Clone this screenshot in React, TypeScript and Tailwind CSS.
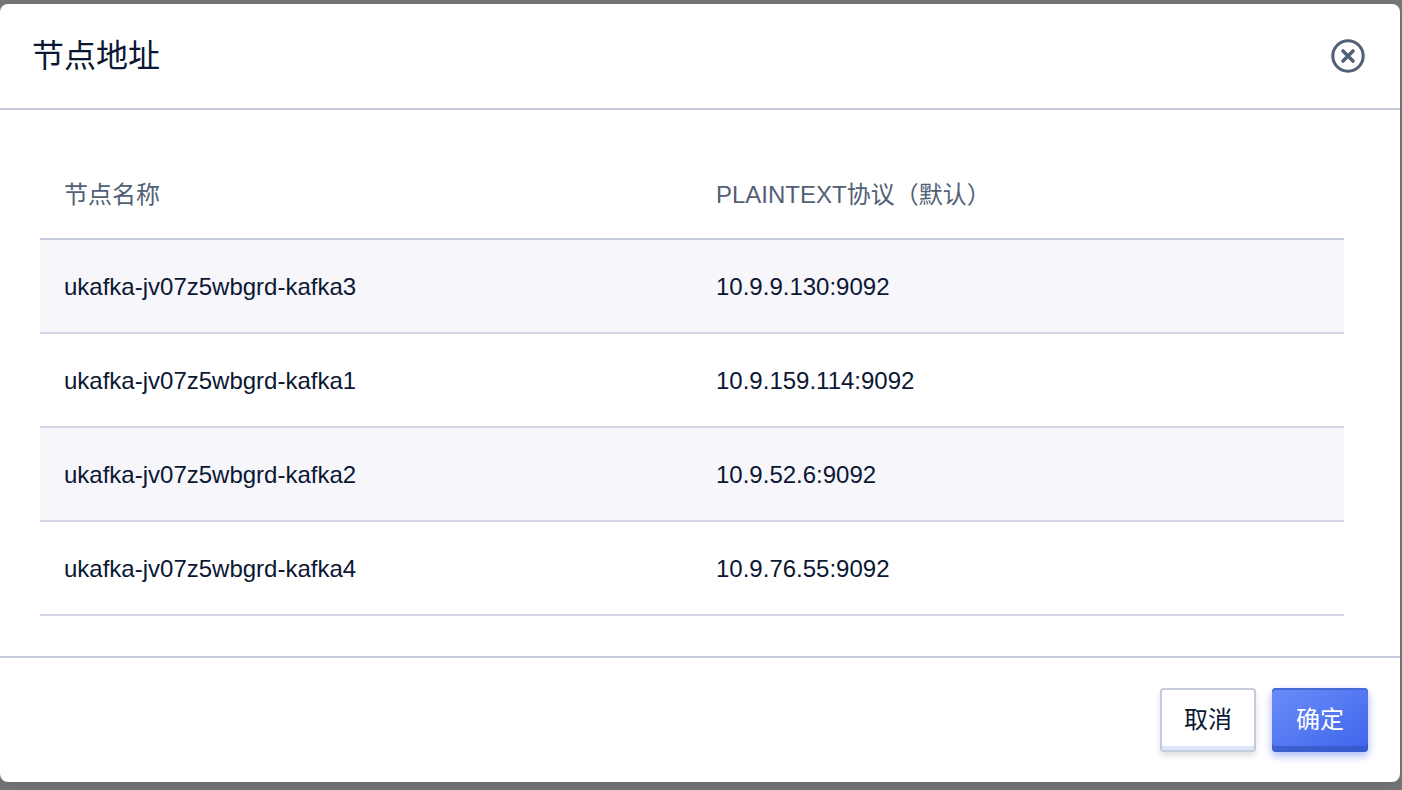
import React from "react";

type KafkaNode = { name: string; address: string };

const nodes: KafkaNode[] = [
  { name: "ukafka-jv07z5wbgrd-kafka3", address: "10.9.9.130:9092" },
  { name: "ukafka-jv07z5wbgrd-kafka1", address: "10.9.159.114:9092" },
  { name: "ukafka-jv07z5wbgrd-kafka2", address: "10.9.52.6:9092" },
  { name: "ukafka-jv07z5wbgrd-kafka4", address: "10.9.76.55:9092" },
];

function CloseIcon() {
  return (
    <svg viewBox="0 0 34 34" className="size-[34px]" fill="none" stroke="currentColor" aria-hidden="true">
      <circle cx="17" cy="17" r="15.2" strokeWidth="3.1" />
      <path d="M12 12 22 22M22 12 12 22" strokeWidth="3.6" strokeLinecap="round" />
    </svg>
  );
}

function NodeTable() {
  return (
    <table className="w-full table-fixed border-separate border-spacing-0 text-left text-2xl">
      <thead>
        <tr className="h-[90px] text-[#526075]">
          <th scope="col" className="border-b-2 border-[#c4c9db] px-6 pt-0.5 font-normal">
            节点名称
          </th>
          <th scope="col" className="border-b-2 border-[#c4c9db] px-6 pt-0.5 font-normal">
            PLAINTEXT协议（默认）
          </th>
        </tr>
      </thead>
      <tbody>
        {nodes.map((node) => (
          <tr key={node.name} className="h-[94px] odd:bg-[#f6f6fb]">
            <td className="border-b-2 border-[#d3d7e7] px-6 pt-0.5">{node.name}</td>
            <td className="border-b-2 border-[#d3d7e7] px-6 pt-0.5">{node.address}</td>
          </tr>
        ))}
      </tbody>
    </table>
  );
}

export default function App() {
  return (
    <div className="min-h-screen bg-[#767779] pt-1 pr-0.5 pb-2 font-['Liberation_Sans','Noto_Sans_CJK_SC',sans-serif] text-[#0b1733]">
      <section
        role="dialog"
        aria-labelledby="dialog-title"
        className="rounded-lg bg-white shadow-[0_4px_16px_rgba(0,0,0,0.12)]"
      >
        <header className="flex h-[106px] items-center justify-between border-b-2 border-[#c4c9db] pr-[35px] pl-8">
          <h1 id="dialog-title" className="text-[32px] leading-10">
            节点地址
          </h1>
          <button type="button" aria-label="关闭" className="text-[#526075]">
            <CloseIcon />
          </button>
        </header>
        <div className="py-10 pr-14 pl-10">
          <NodeTable />
        </div>
        <footer className="flex justify-end gap-4 border-t-2 border-[#c4c9db] px-8 py-[30px]">
          <button
            type="button"
            className="h-16 w-24 rounded-sm border-2 border-[#c4c9db] bg-white text-2xl shadow-[inset_0_-4px_0_#dfe6fa,0_4px_6px_rgba(0,0,0,0.12)]"
          >
            取消
          </button>
          <button
            type="button"
            className="h-16 w-24 rounded-sm bg-linear-to-br from-[#6b8cf8] to-[#3e64ec] text-2xl text-white shadow-[inset_0_2px_0_#4769d4,inset_0_-6px_0_rgba(48,80,184,0.6),0_4px_8px_rgba(62,100,236,0.45)]"
          >
            确定
          </button>
        </footer>
      </section>
    </div>
  );
}
